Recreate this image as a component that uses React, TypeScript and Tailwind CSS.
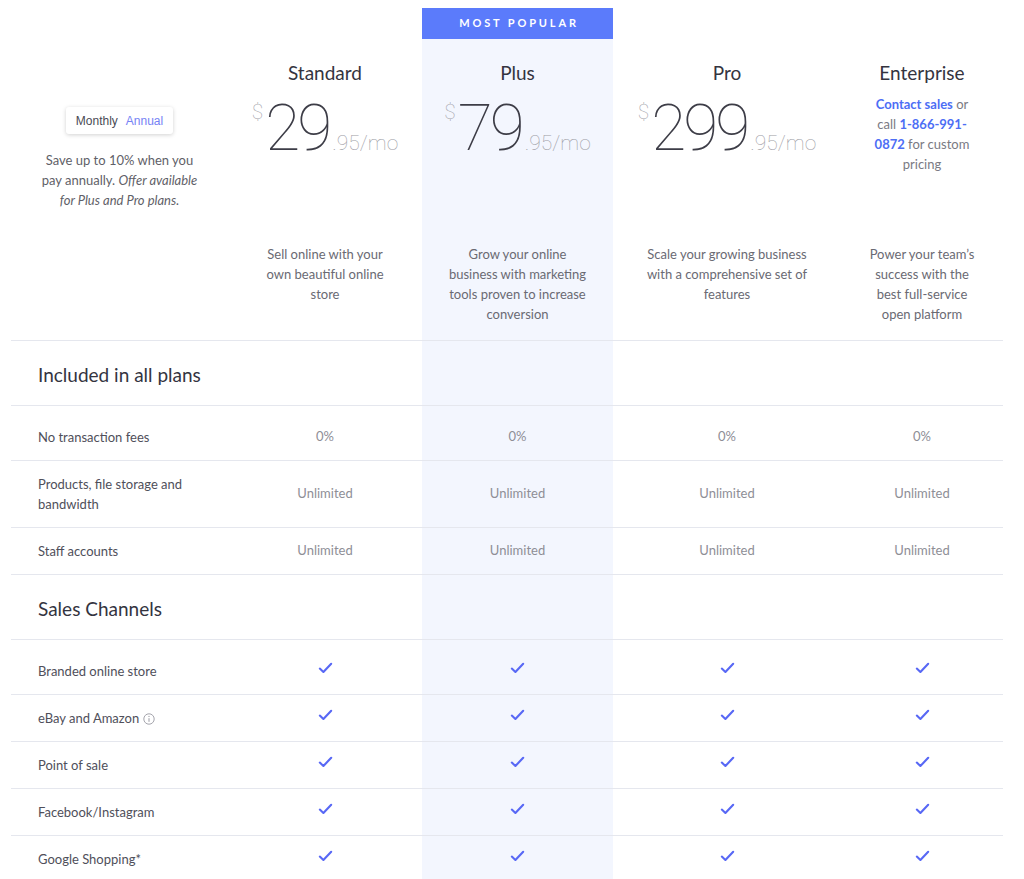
import React from "react";

const GRID = "grid grid-cols-[217px_194px_191px_228px_162px]";
const PLUS_BG = "bg-[#f3f6fe]";
const BORDER = "border-t border-[#e5e7ee]";

function Check() {
  return (
    <svg width="15" height="12" viewBox="0 0 15 12" className="-translate-y-[3px]">
      <path d="M1.8 6.6 L5.4 10 L13.2 1.8" fill="none" stroke="#5868f5" strokeWidth="2.1" strokeLinecap="round" strokeLinejoin="round" />
    </svg>
  );
}

function Info() {
  return (
    <svg width="12" height="12" viewBox="0 0 12 12" className="inline-block ml-[4px] -mt-[2px] align-middle">
      <circle cx="6" cy="6" r="5.2" fill="none" stroke="#9a9aa3" strokeWidth="0.9" />
      <line x1="6" y1="5.2" x2="6" y2="8.8" stroke="#9a9aa3" strokeWidth="1" />
      <circle cx="6" cy="3.4" r="0.6" fill="#9a9aa3" />
    </svg>
  );
}

function Price({ whole }: { whole: string }) {
  return (
    <div className="flex items-baseline justify-center mt-[12px]">
      <span className="self-start text-[21px] leading-none text-[#a3a3ab] font-[Roboto,sans-serif] font-thin mt-[5px] mr-[2px]">$</span>
      <span className="text-[64px] leading-[64px] text-[#3d3d47] font-[Roboto,sans-serif] font-thin tracking-[-3px]">{whole}</span>
      <span className="text-[21px] text-[#9d9da5] font-[Roboto,sans-serif] font-thin ml-[3px]">.95/mo</span>
    </div>
  );
}

function PlanHead({ name, children, desc, pad, plus }: { name: string; children: React.ReactNode; desc: string; pad: string; plus?: boolean }) {
  return (
    <div className="flex flex-col">
      {plus ? (
        <div className="h-[31px] bg-[#5b7bfb] flex items-center justify-center text-white text-[11px] font-bold tracking-[0.26em] pl-[3px]">
          MOST POPULAR
        </div>
      ) : (
        <div className="h-[31px]" />
      )}
      <div className={`flex-1 flex flex-col items-center ${plus ? PLUS_BG : ""}`}>
        <div className="h-[205px] flex flex-col items-center pt-[22px] w-full">
          <div className="text-[19px] leading-[24px] text-[#34343f]">{name}</div>
          {children}
        </div>
        <div className={`${pad} text-center text-[13px] leading-[20px] text-[#6a6a73] pb-[16px]`}>{desc}</div>
      </div>
    </div>
  );
}

function SectionHead({ title }: { title: string }) {
  return (
    <div className={`${GRID} ${BORDER} h-[65px]`}>
      <div className="pl-[27px] pt-[22px] text-[19px] leading-[24px] text-[#34343f] col-span-2">{title}</div>
      <div className={PLUS_BG} />
      <div />
      <div />
    </div>
  );
}

function Row({ label, values, first, info }: { label: string; values: (string | null)[]; first?: boolean; info?: boolean }) {
  return (
    <div className={`${GRID} ${BORDER}`}>
      <div className={`pl-[27px] pr-[20px] ${first ? "pt-[21px]" : "pt-[13px]"} pb-[13px] text-[13px] leading-[20px] text-[#4f4f5a] flex items-center`}>
        <span>
          {label}
          {info && <Info />}
        </span>
      </div>
      {values.map((v, i) => (
        <div
          key={i}
          className={`flex items-center justify-center ${first ? "pt-[8px]" : ""} ${i === 1 ? PLUS_BG : ""} text-[13px] text-[#8e8e96]`}
        >
          {v === null ? <Check /> : v}
        </div>
      ))}
    </div>
  );
}

export default function App() {
  const checks = [null, null, null, null];
  return (
    <div className="bg-white min-h-[879px] pt-[8px] font-[Lato,'Open_Sans',sans-serif]">
      <div className="ml-[11px] w-[992px]">
        <div className={GRID}>
          <div className="flex flex-col items-center pt-[99px] px-[26px]">
            <div className="flex items-center gap-[8px] h-[27px] px-[10px] bg-white rounded-[3px] shadow-[0_1px_4px_rgba(0,0,0,0.18)] text-[12px] font-['Liberation_Sans',Arial,sans-serif]">
              <span className="text-[#4a4a55]">Monthly</span>
              <span className="text-[#7683f5]">Annual</span>
            </div>
            <div className="mt-[16px] text-center text-[13px] leading-[20px] text-[#5f5f68]">
              Save up to 10% when you pay annually. <em>Offer available for Plus and Pro plans.</em>
            </div>
          </div>
          <PlanHead name="Standard" desc="Sell online with your own beautiful online store" pad="px-[28px]">
            <Price whole="29" />
          </PlanHead>
          <PlanHead name="Plus" desc="Grow your online business with marketing tools proven to increase conversion" pad="px-[24px]" plus>
            <Price whole="79" />
          </PlanHead>
          <PlanHead name="Pro" desc="Scale your growing business with a comprehensive set of features" pad="px-[24px]">
            <Price whole="299" />
          </PlanHead>
          <PlanHead name="Enterprise" desc="Power your team’s success with the best full-service open platform" pad="px-[28px]">
            <div className="mt-[9px] px-[28px] text-center text-[13px] leading-[20px] text-[#7a7a83]">
              <span className="font-bold text-[#4d6ef5]">Contact sales</span> or call{" "}
              <span className="font-bold text-[#4d6ef5]">1-866-991-0872</span> for custom pricing
            </div>
          </PlanHead>
        </div>

        <SectionHead title="Included in all plans" />
        <Row label="No transaction fees" values={["0%", "0%", "0%", "0%"]} first />
        <Row label="Products, file storage and bandwidth" values={["Unlimited", "Unlimited", "Unlimited", "Unlimited"]} />
        <Row label="Staff accounts" values={["Unlimited", "Unlimited", "Unlimited", "Unlimited"]} />

        <SectionHead title="Sales Channels" />
        <Row label="Branded online store" values={checks} first />
        <Row label="eBay and Amazon" values={checks} info />
        <Row label="Point of sale" values={checks} />
        <Row label="Facebook/Instagram" values={checks} />
        <Row label="Google Shopping*" values={checks} />
      </div>
    </div>
  );
}
